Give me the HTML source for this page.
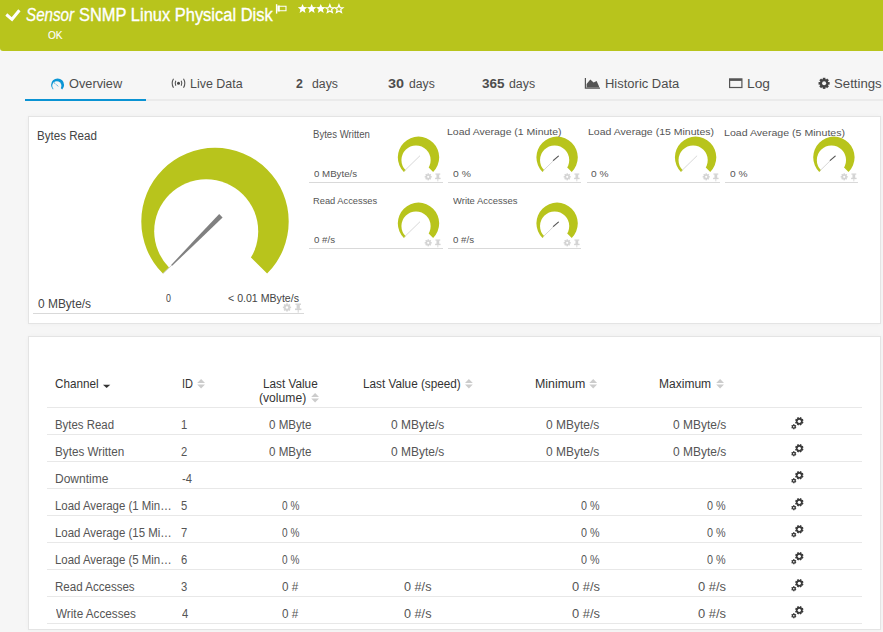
<!DOCTYPE html><html><head><meta charset="utf-8"><style>
*{margin:0;padding:0;box-sizing:border-box}
html,body{width:883px;height:632px;overflow:hidden;background:#f6f6f6;font-family:"Liberation Sans",sans-serif}
.a{position:absolute}
.x{position:absolute;white-space:nowrap;transform-origin:0 0}
.panel{position:absolute;left:28px;width:853px;background:#fff;border:1px solid #e4e4e4;box-shadow:0 0 4px rgba(0,0,0,0.035)}
.ln{position:absolute;height:1px;background:#d9d9d9}
.rl{position:absolute;left:47px;width:815px;height:1px;background:#e8e8e8}
svg.full{position:absolute;left:0;top:0}
</style></head><body>
<div class="a" style="left:0;top:0;width:883px;height:51px;background:#b8c41c;border-bottom-left-radius:3px"></div>
<div class="a" style="left:25px;top:99px;width:858px;height:2px;background:#ebebeb"></div>
<div class="a" style="left:25px;top:99px;width:121px;height:2px;background:#0a93d3"></div>
<div class="panel" style="top:116px;height:208px"></div>
<div class="panel" style="top:336px;height:294px"></div>
<div class="ln" style="left:33px;top:313px;width:271px"></div>
<div class="rl" style="top:407px"></div>
<div class="rl" style="top:434px"></div>
<div class="rl" style="top:461px"></div>
<div class="rl" style="top:488px"></div>
<div class="rl" style="top:515px"></div>
<div class="rl" style="top:542px"></div>
<div class="rl" style="top:569px"></div>
<div class="rl" style="top:596px"></div>
<div class="rl" style="top:623px"></div>
<div class="ln" style="left:309px;top:182px;width:134px"></div>
<div class="ln" style="left:448px;top:182px;width:133px"></div>
<div class="ln" style="left:587px;top:182px;width:133px"></div>
<div class="ln" style="left:725px;top:182px;width:133px"></div>
<div class="ln" style="left:309px;top:248px;width:134px"></div>
<div class="ln" style="left:448px;top:248px;width:133px"></div>
<svg class="full" width="883" height="632"><path d="M6.3 14.5 L12 19.3 L19.4 10.3" stroke="#fff" stroke-width="3" fill="none"/><path d="M276.6 4.2 V13.6" stroke="#fff" stroke-width="1.4"/><path d="M278.2 6.2 H286 V10.8 H278.2 Z" stroke="#fff" stroke-width="1.1" fill="none"/><rect x="277.6" y="5.6" width="2.2" height="5.8" fill="#fff"/><path transform="translate(297.6 3.6) scale(1.1)" d="M4.5 0.3 L5.7 3.2 L8.8 3.4 L6.4 5.4 L7.2 8.5 L4.5 6.8 L1.8 8.5 L2.6 5.4 L0.2 3.4 L3.3 3.2 Z" fill="#fff"/><path transform="translate(306.70000000000005 3.6) scale(1.1)" d="M4.5 0.3 L5.7 3.2 L8.8 3.4 L6.4 5.4 L7.2 8.5 L4.5 6.8 L1.8 8.5 L2.6 5.4 L0.2 3.4 L3.3 3.2 Z" fill="#fff"/><path transform="translate(315.8 3.6) scale(1.1)" d="M4.5 0.3 L5.7 3.2 L8.8 3.4 L6.4 5.4 L7.2 8.5 L4.5 6.8 L1.8 8.5 L2.6 5.4 L0.2 3.4 L3.3 3.2 Z" fill="#fff"/><path transform="translate(324.90000000000003 3.6) scale(1.1)" d="M4.5 1 L5.5 3.6 L8.2 3.8 L6.1 5.5 L6.8 8 L4.5 6.6 L2.2 8 L2.9 5.5 L0.8 3.8 L3.5 3.6 Z" fill="none" stroke="#fff" stroke-width="1.1"/><path transform="translate(334.0 3.6) scale(1.1)" d="M4.5 1 L5.5 3.6 L8.2 3.8 L6.1 5.5 L6.8 8 L4.5 6.6 L2.2 8 L2.9 5.5 L0.8 3.8 L3.5 3.6 Z" fill="none" stroke="#fff" stroke-width="1.1"/><path d="M57.60 84.90 L53.00 89.50 A6.50 6.50 0 1 1 62.20 89.50 Z" fill="#0b96d5"/><circle cx="56.82" cy="85.76" r="4.59" fill="#f6f6f6"/><path d="M54 82.6 L58.6 86.6" stroke="#0b96d5" stroke-width="0.9" stroke-dasharray="1.2 1"/><g stroke="#555" stroke-width="1.1" fill="none"><path d="M173.5 78.8 Q170.8 83.3 173.5 87.8 M183.5 78.8 Q186.2 83.3 183.5 87.8"/><path d="M175.8 80.8 Q174.5 83.3 175.8 85.8 M181.2 80.8 Q182.5 83.3 181.2 85.8"/></g><circle cx="178.5" cy="83.3" r="1.5" fill="#444"/><path d="M585.4 78 V88.2 H600" stroke="#555" stroke-width="1.2" fill="none"/><path d="M586.6 87.6 V84 L590.3 79.4 L593.6 82.6 L596.6 81 L599 86.2 V87.6 Z" fill="#555"/><rect x="729.6" y="78.9" width="12.3" height="8.6" fill="none" stroke="#555" stroke-width="1.2"/><rect x="729.6" y="78.9" width="12.3" height="2" fill="#555"/><g fill="#444"><rect x="822.8" y="77.8" width="2.6" height="11.1" transform="rotate(0 824.1 83.35)"/><rect x="822.8" y="77.8" width="2.6" height="11.1" transform="rotate(45 824.1 83.35)"/><rect x="822.8" y="77.8" width="2.6" height="11.1" transform="rotate(90 824.1 83.35)"/><rect x="822.8" y="77.8" width="2.6" height="11.1" transform="rotate(135 824.1 83.35)"/><circle cx="824.1" cy="83.35" r="4.3"/></g><circle cx="824.1" cy="83.35" r="2.0" fill="#f6f6f6"/><path d="M215.00 221.50 L162.89 273.61 A73.70 73.70 0 1 1 267.11 273.61 Z" fill="#b8c41c"/><circle cx="206.20" cy="231.20" r="52.00" fill="#fff"/><polygon points="219.20,214.01 194.99,239.40 171.11,265.11 171.89,265.89 197.41,241.80 222.60,217.39" fill="#808080"/><line x1="172.00" y1="265.00" x2="163.00" y2="273.50" stroke="#bbb" stroke-width="0.7"/><g transform="translate(282.8 303.3) scale(1.0)"><g fill="#d4d4d4"><circle cx="4.2" cy="4.1" r="3.1"/><rect x="3.35" y="0" width="1.7" height="8.2" transform="rotate(0 4.2 4.1)"/><rect x="3.35" y="0" width="1.7" height="8.2" transform="rotate(45 4.2 4.1)"/><rect x="3.35" y="0" width="1.7" height="8.2" transform="rotate(90 4.2 4.1)"/><rect x="3.35" y="0" width="1.7" height="8.2" transform="rotate(135 4.2 4.1)"/></g><circle cx="4.2" cy="4.1" r="1.25" fill="#fff"/><g fill="#d4d4d4"><rect x="12.6" y="0.2" width="5.6" height="1.4"/><rect x="13.8" y="1" width="3.2" height="4.6"/><rect x="12.2" y="5.2" width="6.4" height="1.6"/><rect x="14.9" y="6" width="1" height="3.4"/></g></g><path d="M418.50 157.30 L403.86 171.94 A20.70 20.70 0 1 1 433.14 171.94 Z" fill="#b8c41c"/><circle cx="416.03" cy="160.02" r="14.61" fill="#fff"/><line x1="420.00" y1="155.70" x2="404.50" y2="170.80" stroke="#cdcdcd" stroke-width="0.8"/><g transform="translate(424.6 173.3) scale(0.86)"><g fill="#d4d4d4"><circle cx="4.2" cy="4.1" r="3.1"/><rect x="3.35" y="0" width="1.7" height="8.2" transform="rotate(0 4.2 4.1)"/><rect x="3.35" y="0" width="1.7" height="8.2" transform="rotate(45 4.2 4.1)"/><rect x="3.35" y="0" width="1.7" height="8.2" transform="rotate(90 4.2 4.1)"/><rect x="3.35" y="0" width="1.7" height="8.2" transform="rotate(135 4.2 4.1)"/></g><circle cx="4.2" cy="4.1" r="1.25" fill="#fff"/><g fill="#d4d4d4"><rect x="12.6" y="0.2" width="5.6" height="1.4"/><rect x="13.8" y="1" width="3.2" height="4.6"/><rect x="12.2" y="5.2" width="6.4" height="1.6"/><rect x="14.9" y="6" width="1" height="3.4"/></g></g><path d="M557.10 157.30 L542.46 171.94 A20.70 20.70 0 1 1 571.74 171.94 Z" fill="#b8c41c"/><circle cx="554.63" cy="160.02" r="14.61" fill="#fff"/><line x1="558.60" y1="155.70" x2="543.10" y2="170.80" stroke="#cdcdcd" stroke-width="0.8"/><line x1="553.10" y1="160.60" x2="558.70" y2="155.90" stroke="#555" stroke-width="1.2"/><g transform="translate(563.6 173.3) scale(0.86)"><g fill="#d4d4d4"><circle cx="4.2" cy="4.1" r="3.1"/><rect x="3.35" y="0" width="1.7" height="8.2" transform="rotate(0 4.2 4.1)"/><rect x="3.35" y="0" width="1.7" height="8.2" transform="rotate(45 4.2 4.1)"/><rect x="3.35" y="0" width="1.7" height="8.2" transform="rotate(90 4.2 4.1)"/><rect x="3.35" y="0" width="1.7" height="8.2" transform="rotate(135 4.2 4.1)"/></g><circle cx="4.2" cy="4.1" r="1.25" fill="#fff"/><g fill="#d4d4d4"><rect x="12.6" y="0.2" width="5.6" height="1.4"/><rect x="13.8" y="1" width="3.2" height="4.6"/><rect x="12.2" y="5.2" width="6.4" height="1.6"/><rect x="14.9" y="6" width="1" height="3.4"/></g></g><path d="M695.60 157.30 L680.96 171.94 A20.70 20.70 0 1 1 710.24 171.94 Z" fill="#b8c41c"/><circle cx="693.13" cy="160.02" r="14.61" fill="#fff"/><line x1="697.10" y1="155.70" x2="681.60" y2="170.80" stroke="#cdcdcd" stroke-width="0.8"/><g transform="translate(702.6 173.3) scale(0.86)"><g fill="#d4d4d4"><circle cx="4.2" cy="4.1" r="3.1"/><rect x="3.35" y="0" width="1.7" height="8.2" transform="rotate(0 4.2 4.1)"/><rect x="3.35" y="0" width="1.7" height="8.2" transform="rotate(45 4.2 4.1)"/><rect x="3.35" y="0" width="1.7" height="8.2" transform="rotate(90 4.2 4.1)"/><rect x="3.35" y="0" width="1.7" height="8.2" transform="rotate(135 4.2 4.1)"/></g><circle cx="4.2" cy="4.1" r="1.25" fill="#fff"/><g fill="#d4d4d4"><rect x="12.6" y="0.2" width="5.6" height="1.4"/><rect x="13.8" y="1" width="3.2" height="4.6"/><rect x="12.2" y="5.2" width="6.4" height="1.6"/><rect x="14.9" y="6" width="1" height="3.4"/></g></g><path d="M833.90 157.30 L819.26 171.94 A20.70 20.70 0 1 1 848.54 171.94 Z" fill="#b8c41c"/><circle cx="831.43" cy="160.02" r="14.61" fill="#fff"/><line x1="835.40" y1="155.70" x2="819.90" y2="170.80" stroke="#cdcdcd" stroke-width="0.8"/><line x1="829.90" y1="160.60" x2="835.50" y2="155.90" stroke="#555" stroke-width="1.2"/><g transform="translate(840.6 173.3) scale(0.86)"><g fill="#d4d4d4"><circle cx="4.2" cy="4.1" r="3.1"/><rect x="3.35" y="0" width="1.7" height="8.2" transform="rotate(0 4.2 4.1)"/><rect x="3.35" y="0" width="1.7" height="8.2" transform="rotate(45 4.2 4.1)"/><rect x="3.35" y="0" width="1.7" height="8.2" transform="rotate(90 4.2 4.1)"/><rect x="3.35" y="0" width="1.7" height="8.2" transform="rotate(135 4.2 4.1)"/></g><circle cx="4.2" cy="4.1" r="1.25" fill="#fff"/><g fill="#d4d4d4"><rect x="12.6" y="0.2" width="5.6" height="1.4"/><rect x="13.8" y="1" width="3.2" height="4.6"/><rect x="12.2" y="5.2" width="6.4" height="1.6"/><rect x="14.9" y="6" width="1" height="3.4"/></g></g><path d="M418.50 223.30 L403.86 237.94 A20.70 20.70 0 1 1 433.14 237.94 Z" fill="#b8c41c"/><circle cx="416.03" cy="226.02" r="14.61" fill="#fff"/><line x1="420.00" y1="221.70" x2="404.50" y2="236.80" stroke="#cdcdcd" stroke-width="0.8"/><g transform="translate(424.6 239.3) scale(0.86)"><g fill="#d4d4d4"><circle cx="4.2" cy="4.1" r="3.1"/><rect x="3.35" y="0" width="1.7" height="8.2" transform="rotate(0 4.2 4.1)"/><rect x="3.35" y="0" width="1.7" height="8.2" transform="rotate(45 4.2 4.1)"/><rect x="3.35" y="0" width="1.7" height="8.2" transform="rotate(90 4.2 4.1)"/><rect x="3.35" y="0" width="1.7" height="8.2" transform="rotate(135 4.2 4.1)"/></g><circle cx="4.2" cy="4.1" r="1.25" fill="#fff"/><g fill="#d4d4d4"><rect x="12.6" y="0.2" width="5.6" height="1.4"/><rect x="13.8" y="1" width="3.2" height="4.6"/><rect x="12.2" y="5.2" width="6.4" height="1.6"/><rect x="14.9" y="6" width="1" height="3.4"/></g></g><path d="M557.10 223.30 L542.46 237.94 A20.70 20.70 0 1 1 571.74 237.94 Z" fill="#b8c41c"/><circle cx="554.63" cy="226.02" r="14.61" fill="#fff"/><line x1="558.60" y1="221.70" x2="543.10" y2="236.80" stroke="#cdcdcd" stroke-width="0.8"/><line x1="553.10" y1="226.60" x2="558.70" y2="221.90" stroke="#555" stroke-width="1.2"/><g transform="translate(563.6 239.3) scale(0.86)"><g fill="#d4d4d4"><circle cx="4.2" cy="4.1" r="3.1"/><rect x="3.35" y="0" width="1.7" height="8.2" transform="rotate(0 4.2 4.1)"/><rect x="3.35" y="0" width="1.7" height="8.2" transform="rotate(45 4.2 4.1)"/><rect x="3.35" y="0" width="1.7" height="8.2" transform="rotate(90 4.2 4.1)"/><rect x="3.35" y="0" width="1.7" height="8.2" transform="rotate(135 4.2 4.1)"/></g><circle cx="4.2" cy="4.1" r="1.25" fill="#fff"/><g fill="#d4d4d4"><rect x="12.6" y="0.2" width="5.6" height="1.4"/><rect x="13.8" y="1" width="3.2" height="4.6"/><rect x="12.2" y="5.2" width="6.4" height="1.6"/><rect x="14.9" y="6" width="1" height="3.4"/></g></g><path d="M103 384.7 H110.3 L106.65 388Z" fill="#333"/><path d="M197.2 383 L201.1 379 L205.0 383Z M197.2 384.6 L201.1 388.6 L205.0 384.6Z" fill="#ccc"/><path d="M311.2 397 L315.09999999999997 393 L319.0 397Z M311.2 398.6 L315.09999999999997 402.6 L319.0 398.6Z" fill="#ccc"/><path d="M465 383 L468.9 379 L472.8 383Z M465 384.6 L468.9 388.6 L472.8 384.6Z" fill="#ccc"/><path d="M589.3 383 L593.1999999999999 379 L597.0999999999999 383Z M589.3 384.6 L593.1999999999999 388.6 L597.0999999999999 384.6Z" fill="#ccc"/><path d="M716.2 383 L720.1 379 L724.0 383Z M716.2 384.6 L720.1 388.6 L724.0 384.6Z" fill="#ccc"/><g fill="#3a3a3a"><rect x="798.4" y="417.1" width="1.8" height="8.4" transform="rotate(22.5 799.3 421.3)"/><rect x="798.4" y="417.1" width="1.8" height="8.4" transform="rotate(67.5 799.3 421.3)"/><rect x="798.4" y="417.1" width="1.8" height="8.4" transform="rotate(112.5 799.3 421.3)"/><rect x="798.4" y="417.1" width="1.8" height="8.4" transform="rotate(157.5 799.3 421.3)"/><circle cx="799.3" cy="421.3" r="3.2"/><rect x="793.1999999999999" y="424.09999999999997" width="1.2" height="5.2" transform="rotate(0 793.8 426.7)"/><rect x="793.1999999999999" y="424.09999999999997" width="1.2" height="5.2" transform="rotate(60 793.8 426.7)"/><rect x="793.1999999999999" y="424.09999999999997" width="1.2" height="5.2" transform="rotate(120 793.8 426.7)"/><circle cx="793.8" cy="426.7" r="2"/></g><circle cx="799.3" cy="421.3" r="1.6" fill="#fff"/><circle cx="793.8" cy="426.7" r="0.8" fill="#fff"/><g fill="#3a3a3a"><rect x="798.4" y="444.1" width="1.8" height="8.4" transform="rotate(22.5 799.3 448.3)"/><rect x="798.4" y="444.1" width="1.8" height="8.4" transform="rotate(67.5 799.3 448.3)"/><rect x="798.4" y="444.1" width="1.8" height="8.4" transform="rotate(112.5 799.3 448.3)"/><rect x="798.4" y="444.1" width="1.8" height="8.4" transform="rotate(157.5 799.3 448.3)"/><circle cx="799.3" cy="448.3" r="3.2"/><rect x="793.1999999999999" y="451.09999999999997" width="1.2" height="5.2" transform="rotate(0 793.8 453.7)"/><rect x="793.1999999999999" y="451.09999999999997" width="1.2" height="5.2" transform="rotate(60 793.8 453.7)"/><rect x="793.1999999999999" y="451.09999999999997" width="1.2" height="5.2" transform="rotate(120 793.8 453.7)"/><circle cx="793.8" cy="453.7" r="2"/></g><circle cx="799.3" cy="448.3" r="1.6" fill="#fff"/><circle cx="793.8" cy="453.7" r="0.8" fill="#fff"/><g fill="#3a3a3a"><rect x="798.4" y="471.1" width="1.8" height="8.4" transform="rotate(22.5 799.3 475.3)"/><rect x="798.4" y="471.1" width="1.8" height="8.4" transform="rotate(67.5 799.3 475.3)"/><rect x="798.4" y="471.1" width="1.8" height="8.4" transform="rotate(112.5 799.3 475.3)"/><rect x="798.4" y="471.1" width="1.8" height="8.4" transform="rotate(157.5 799.3 475.3)"/><circle cx="799.3" cy="475.3" r="3.2"/><rect x="793.1999999999999" y="478.09999999999997" width="1.2" height="5.2" transform="rotate(0 793.8 480.7)"/><rect x="793.1999999999999" y="478.09999999999997" width="1.2" height="5.2" transform="rotate(60 793.8 480.7)"/><rect x="793.1999999999999" y="478.09999999999997" width="1.2" height="5.2" transform="rotate(120 793.8 480.7)"/><circle cx="793.8" cy="480.7" r="2"/></g><circle cx="799.3" cy="475.3" r="1.6" fill="#fff"/><circle cx="793.8" cy="480.7" r="0.8" fill="#fff"/><g fill="#3a3a3a"><rect x="798.4" y="498.1" width="1.8" height="8.4" transform="rotate(22.5 799.3 502.3)"/><rect x="798.4" y="498.1" width="1.8" height="8.4" transform="rotate(67.5 799.3 502.3)"/><rect x="798.4" y="498.1" width="1.8" height="8.4" transform="rotate(112.5 799.3 502.3)"/><rect x="798.4" y="498.1" width="1.8" height="8.4" transform="rotate(157.5 799.3 502.3)"/><circle cx="799.3" cy="502.3" r="3.2"/><rect x="793.1999999999999" y="505.09999999999997" width="1.2" height="5.2" transform="rotate(0 793.8 507.7)"/><rect x="793.1999999999999" y="505.09999999999997" width="1.2" height="5.2" transform="rotate(60 793.8 507.7)"/><rect x="793.1999999999999" y="505.09999999999997" width="1.2" height="5.2" transform="rotate(120 793.8 507.7)"/><circle cx="793.8" cy="507.7" r="2"/></g><circle cx="799.3" cy="502.3" r="1.6" fill="#fff"/><circle cx="793.8" cy="507.7" r="0.8" fill="#fff"/><g fill="#3a3a3a"><rect x="798.4" y="525.0999999999999" width="1.8" height="8.4" transform="rotate(22.5 799.3 529.3)"/><rect x="798.4" y="525.0999999999999" width="1.8" height="8.4" transform="rotate(67.5 799.3 529.3)"/><rect x="798.4" y="525.0999999999999" width="1.8" height="8.4" transform="rotate(112.5 799.3 529.3)"/><rect x="798.4" y="525.0999999999999" width="1.8" height="8.4" transform="rotate(157.5 799.3 529.3)"/><circle cx="799.3" cy="529.3" r="3.2"/><rect x="793.1999999999999" y="532.0999999999999" width="1.2" height="5.2" transform="rotate(0 793.8 534.6999999999999)"/><rect x="793.1999999999999" y="532.0999999999999" width="1.2" height="5.2" transform="rotate(60 793.8 534.6999999999999)"/><rect x="793.1999999999999" y="532.0999999999999" width="1.2" height="5.2" transform="rotate(120 793.8 534.6999999999999)"/><circle cx="793.8" cy="534.6999999999999" r="2"/></g><circle cx="799.3" cy="529.3" r="1.6" fill="#fff"/><circle cx="793.8" cy="534.6999999999999" r="0.8" fill="#fff"/><g fill="#3a3a3a"><rect x="798.4" y="552.0999999999999" width="1.8" height="8.4" transform="rotate(22.5 799.3 556.3)"/><rect x="798.4" y="552.0999999999999" width="1.8" height="8.4" transform="rotate(67.5 799.3 556.3)"/><rect x="798.4" y="552.0999999999999" width="1.8" height="8.4" transform="rotate(112.5 799.3 556.3)"/><rect x="798.4" y="552.0999999999999" width="1.8" height="8.4" transform="rotate(157.5 799.3 556.3)"/><circle cx="799.3" cy="556.3" r="3.2"/><rect x="793.1999999999999" y="559.0999999999999" width="1.2" height="5.2" transform="rotate(0 793.8 561.6999999999999)"/><rect x="793.1999999999999" y="559.0999999999999" width="1.2" height="5.2" transform="rotate(60 793.8 561.6999999999999)"/><rect x="793.1999999999999" y="559.0999999999999" width="1.2" height="5.2" transform="rotate(120 793.8 561.6999999999999)"/><circle cx="793.8" cy="561.6999999999999" r="2"/></g><circle cx="799.3" cy="556.3" r="1.6" fill="#fff"/><circle cx="793.8" cy="561.6999999999999" r="0.8" fill="#fff"/><g fill="#3a3a3a"><rect x="798.4" y="579.0999999999999" width="1.8" height="8.4" transform="rotate(22.5 799.3 583.3)"/><rect x="798.4" y="579.0999999999999" width="1.8" height="8.4" transform="rotate(67.5 799.3 583.3)"/><rect x="798.4" y="579.0999999999999" width="1.8" height="8.4" transform="rotate(112.5 799.3 583.3)"/><rect x="798.4" y="579.0999999999999" width="1.8" height="8.4" transform="rotate(157.5 799.3 583.3)"/><circle cx="799.3" cy="583.3" r="3.2"/><rect x="793.1999999999999" y="586.0999999999999" width="1.2" height="5.2" transform="rotate(0 793.8 588.6999999999999)"/><rect x="793.1999999999999" y="586.0999999999999" width="1.2" height="5.2" transform="rotate(60 793.8 588.6999999999999)"/><rect x="793.1999999999999" y="586.0999999999999" width="1.2" height="5.2" transform="rotate(120 793.8 588.6999999999999)"/><circle cx="793.8" cy="588.6999999999999" r="2"/></g><circle cx="799.3" cy="583.3" r="1.6" fill="#fff"/><circle cx="793.8" cy="588.6999999999999" r="0.8" fill="#fff"/><g fill="#3a3a3a"><rect x="798.4" y="606.0999999999999" width="1.8" height="8.4" transform="rotate(22.5 799.3 610.3)"/><rect x="798.4" y="606.0999999999999" width="1.8" height="8.4" transform="rotate(67.5 799.3 610.3)"/><rect x="798.4" y="606.0999999999999" width="1.8" height="8.4" transform="rotate(112.5 799.3 610.3)"/><rect x="798.4" y="606.0999999999999" width="1.8" height="8.4" transform="rotate(157.5 799.3 610.3)"/><circle cx="799.3" cy="610.3" r="3.2"/><rect x="793.1999999999999" y="613.0999999999999" width="1.2" height="5.2" transform="rotate(0 793.8 615.6999999999999)"/><rect x="793.1999999999999" y="613.0999999999999" width="1.2" height="5.2" transform="rotate(60 793.8 615.6999999999999)"/><rect x="793.1999999999999" y="613.0999999999999" width="1.2" height="5.2" transform="rotate(120 793.8 615.6999999999999)"/><circle cx="793.8" cy="615.6999999999999" r="2"/></g><circle cx="799.3" cy="610.3" r="1.6" fill="#fff"/><circle cx="793.8" cy="615.6999999999999" r="0.8" fill="#fff"/></svg>
<div class="x" style="left:26.14px;top:7.00px;font-size:17.73px;line-height:17.73px;color:#fff;font-weight:400;font-style:italic;transform:scaleX(0.8571);-webkit-text-stroke:0.3px #fff;">Sensor</div>
<div class="x" style="left:79.27px;top:7.00px;font-size:17.73px;line-height:17.73px;color:#fff;font-weight:400;font-style:normal;transform:scaleX(0.9290);-webkit-text-stroke:0.35px #fff;">SNMP Linux Physical Disk</div>
<div class="x" style="left:47.60px;top:30.00px;font-size:11.48px;line-height:11.48px;color:#fff;font-weight:400;font-style:normal;transform:scaleX(0.8813);-webkit-text-stroke:0.1px #fff;">OK</div>
<div class="x" style="left:68.59px;top:78.00px;font-size:12.65px;line-height:12.65px;color:#4d4d4d;font-weight:400;font-style:normal;transform:scaleX(1.0096);">Overview</div>
<div class="x" style="left:189.63px;top:78.00px;font-size:12.79px;line-height:12.79px;color:#4d4d4d;font-weight:400;font-style:normal;transform:scaleX(0.9736);">Live Data</div>
<div class="x" style="left:296.00px;top:78.00px;font-size:12.35px;line-height:12.35px;color:#4d4d4d;font-weight:700;font-style:normal;transform:scaleX(1.0000);">2</div>
<div class="x" style="left:312.40px;top:78.00px;font-size:12.65px;line-height:12.65px;color:#4d4d4d;font-weight:400;font-style:normal;transform:scaleX(0.9704);">days</div>
<div class="x" style="left:387.53px;top:78.00px;font-size:12.35px;line-height:12.35px;color:#4d4d4d;font-weight:700;font-style:normal;transform:scaleX(1.1667);">30</div>
<div class="x" style="left:408.50px;top:78.00px;font-size:12.65px;line-height:12.65px;color:#4d4d4d;font-weight:400;font-style:normal;transform:scaleX(0.9630);">days</div>
<div class="x" style="left:482.31px;top:78.00px;font-size:12.35px;line-height:12.35px;color:#4d4d4d;font-weight:700;font-style:normal;transform:scaleX(1.0947);">365</div>
<div class="x" style="left:508.60px;top:78.00px;font-size:12.65px;line-height:12.65px;color:#4d4d4d;font-weight:400;font-style:normal;transform:scaleX(0.9778);">days</div>
<div class="x" style="left:604.97px;top:78.00px;font-size:12.65px;line-height:12.65px;color:#4d4d4d;font-weight:400;font-style:normal;transform:scaleX(1.0268);">Historic Data</div>
<div class="x" style="left:746.61px;top:78.00px;font-size:12.65px;line-height:12.65px;color:#4d4d4d;font-weight:400;font-style:normal;transform:scaleX(1.0895);">Log</div>
<div class="x" style="left:834.18px;top:78.00px;font-size:12.94px;line-height:12.94px;color:#4d4d4d;font-weight:400;font-style:normal;transform:scaleX(1.0200);">Settings</div>
<div class="x" style="left:37.05px;top:130.00px;font-size:12.21px;line-height:12.21px;color:#444;font-weight:400;font-style:normal;transform:scaleX(0.9492);">Bytes Read</div>
<div class="x" style="left:38.00px;top:298.00px;font-size:12.65px;line-height:12.65px;color:#444;font-weight:400;font-style:normal;transform:scaleX(0.9446);">0 MByte/s</div>
<div class="x" style="left:165.60px;top:293.00px;font-size:11.05px;line-height:11.05px;color:#444;font-weight:400;font-style:normal;transform:scaleX(0.8000);">0</div>
<div class="x" style="left:227.50px;top:293.00px;font-size:11.05px;line-height:11.05px;color:#444;font-weight:400;font-style:normal;transform:scaleX(0.9595);">&lt; 0.01 MByte/s</div>
<div class="x" style="left:313.24px;top:130.00px;font-size:10.03px;line-height:10.03px;color:#555;font-weight:400;font-style:normal;transform:scaleX(0.9586);">Bytes Written</div>
<div class="x" style="left:447.44px;top:127.00px;font-size:9.88px;line-height:9.88px;color:#555;font-weight:400;font-style:normal;transform:scaleX(1.0607);">Load Average (1 Minute)</div>
<div class="x" style="left:587.54px;top:127.00px;font-size:9.88px;line-height:9.88px;color:#555;font-weight:400;font-style:normal;transform:scaleX(1.0650);">Load Average (15 Minutes)</div>
<div class="x" style="left:724.13px;top:128.00px;font-size:9.88px;line-height:9.88px;color:#555;font-weight:400;font-style:normal;transform:scaleX(1.0721);">Load Average (5 Minutes)</div>
<div class="x" style="left:313.36px;top:196.00px;font-size:9.88px;line-height:9.88px;color:#555;font-weight:400;font-style:normal;transform:scaleX(0.9433);">Read Accesses</div>
<div class="x" style="left:452.70px;top:196.00px;font-size:9.88px;line-height:9.88px;color:#555;font-weight:400;font-style:normal;transform:scaleX(0.9567);">Write Accesses</div>
<div class="x" style="left:314.00px;top:169.00px;font-size:9.59px;line-height:9.59px;color:#555;font-weight:400;font-style:normal;transform:scaleX(1.0119);">0 MByte/s</div>
<div class="x" style="left:452.70px;top:169.00px;font-size:9.59px;line-height:9.59px;color:#555;font-weight:400;font-style:normal;transform:scaleX(1.0813);">0 %</div>
<div class="x" style="left:591.00px;top:169.00px;font-size:9.59px;line-height:9.59px;color:#555;font-weight:400;font-style:normal;transform:scaleX(1.0625);">0 %</div>
<div class="x" style="left:729.50px;top:169.00px;font-size:9.59px;line-height:9.59px;color:#555;font-weight:400;font-style:normal;transform:scaleX(1.0625);">0 %</div>
<div class="x" style="left:314.00px;top:235.00px;font-size:9.59px;line-height:9.59px;color:#555;font-weight:400;font-style:normal;transform:scaleX(1.0143);">0 #/s</div>
<div class="x" style="left:452.70px;top:235.00px;font-size:9.59px;line-height:9.59px;color:#555;font-weight:400;font-style:normal;transform:scaleX(1.0143);">0 #/s</div>
<div class="x" style="left:54.98px;top:378.00px;font-size:12.79px;line-height:12.79px;color:#333;font-weight:400;font-style:normal;transform:scaleX(0.9152);">Channel</div>
<div class="x" style="left:181.62px;top:378.00px;font-size:12.5px;line-height:12.5px;color:#333;font-weight:400;font-style:normal;transform:scaleX(0.8818);">ID</div>
<div class="x" style="left:262.96px;top:378.00px;font-size:12.5px;line-height:12.5px;color:#333;font-weight:400;font-style:normal;transform:scaleX(0.9404);">Last Value</div>
<div class="x" style="left:259.43px;top:392.00px;font-size:12.5px;line-height:12.5px;color:#333;font-weight:400;font-style:normal;transform:scaleX(0.9702);">(volume)</div>
<div class="x" style="left:362.76px;top:378.00px;font-size:12.5px;line-height:12.5px;color:#333;font-weight:400;font-style:normal;transform:scaleX(0.9402);">Last Value (speed)</div>
<div class="x" style="left:534.81px;top:378.00px;font-size:12.5px;line-height:12.5px;color:#333;font-weight:400;font-style:normal;transform:scaleX(0.9918);">Minimum</div>
<div class="x" style="left:659.04px;top:378.00px;font-size:12.5px;line-height:12.5px;color:#333;font-weight:400;font-style:normal;transform:scaleX(0.9623);">Maximum</div>
<div class="x" style="left:55.36px;top:419.00px;font-size:12.21px;line-height:12.21px;color:#555;font-weight:400;font-style:normal;transform:scaleX(0.9361);">Bytes Read</div>
<div class="x" style="left:181.28px;top:419.00px;font-size:12.21px;line-height:12.21px;color:#555;font-weight:400;font-style:normal;transform:scaleX(0.9200);">1</div>
<div class="x" style="left:269.40px;top:419.00px;font-size:12.21px;line-height:12.21px;color:#555;font-weight:400;font-style:normal;transform:scaleX(0.9500);">0 MByte</div>
<div class="x" style="left:390.90px;top:419.00px;font-size:12.21px;line-height:12.21px;color:#555;font-weight:400;font-style:normal;transform:scaleX(0.9815);">0 MByte/s</div>
<div class="x" style="left:545.80px;top:419.00px;font-size:12.21px;line-height:12.21px;color:#555;font-weight:400;font-style:normal;transform:scaleX(0.9815);">0 MByte/s</div>
<div class="x" style="left:672.80px;top:419.00px;font-size:12.21px;line-height:12.21px;color:#555;font-weight:400;font-style:normal;transform:scaleX(0.9815);">0 MByte/s</div>
<div class="x" style="left:55.34px;top:446.00px;font-size:12.21px;line-height:12.21px;color:#555;font-weight:400;font-style:normal;transform:scaleX(0.9577);">Bytes Written</div>
<div class="x" style="left:181.08px;top:446.00px;font-size:12.21px;line-height:12.21px;color:#555;font-weight:400;font-style:normal;transform:scaleX(0.9200);">2</div>
<div class="x" style="left:269.40px;top:446.00px;font-size:12.21px;line-height:12.21px;color:#555;font-weight:400;font-style:normal;transform:scaleX(0.9500);">0 MByte</div>
<div class="x" style="left:390.90px;top:446.00px;font-size:12.21px;line-height:12.21px;color:#555;font-weight:400;font-style:normal;transform:scaleX(0.9815);">0 MByte/s</div>
<div class="x" style="left:545.80px;top:446.00px;font-size:12.21px;line-height:12.21px;color:#555;font-weight:400;font-style:normal;transform:scaleX(0.9815);">0 MByte/s</div>
<div class="x" style="left:672.80px;top:446.00px;font-size:12.21px;line-height:12.21px;color:#555;font-weight:400;font-style:normal;transform:scaleX(0.9815);">0 MByte/s</div>
<div class="x" style="left:55.32px;top:473.00px;font-size:12.21px;line-height:12.21px;color:#555;font-weight:400;font-style:normal;transform:scaleX(0.9830);">Downtime</div>
<div class="x" style="left:181.80px;top:473.00px;font-size:12.21px;line-height:12.21px;color:#555;font-weight:400;font-style:normal;transform:scaleX(0.9200);">-4</div>
<div class="x" style="left:55.36px;top:500.00px;font-size:12.21px;line-height:12.21px;color:#555;font-weight:400;font-style:normal;transform:scaleX(0.9361);">Load Average (1 Min…</div>
<div class="x" style="left:181.08px;top:500.00px;font-size:12.21px;line-height:12.21px;color:#555;font-weight:400;font-style:normal;transform:scaleX(0.9200);">5</div>
<div class="x" style="left:281.90px;top:500.00px;font-size:12.21px;line-height:12.21px;color:#555;font-weight:400;font-style:normal;transform:scaleX(0.8238);">0 %</div>
<div class="x" style="left:580.50px;top:500.00px;font-size:12.21px;line-height:12.21px;color:#555;font-weight:400;font-style:normal;transform:scaleX(0.8810);">0 %</div>
<div class="x" style="left:707.40px;top:500.00px;font-size:12.21px;line-height:12.21px;color:#555;font-weight:400;font-style:normal;transform:scaleX(0.8857);">0 %</div>
<div class="x" style="left:55.36px;top:527.00px;font-size:12.21px;line-height:12.21px;color:#555;font-weight:400;font-style:normal;transform:scaleX(0.9361);">Load Average (15 Mi…</div>
<div class="x" style="left:181.08px;top:527.00px;font-size:12.21px;line-height:12.21px;color:#555;font-weight:400;font-style:normal;transform:scaleX(0.9200);">7</div>
<div class="x" style="left:281.90px;top:527.00px;font-size:12.21px;line-height:12.21px;color:#555;font-weight:400;font-style:normal;transform:scaleX(0.8238);">0 %</div>
<div class="x" style="left:580.50px;top:527.00px;font-size:12.21px;line-height:12.21px;color:#555;font-weight:400;font-style:normal;transform:scaleX(0.8810);">0 %</div>
<div class="x" style="left:707.40px;top:527.00px;font-size:12.21px;line-height:12.21px;color:#555;font-weight:400;font-style:normal;transform:scaleX(0.8857);">0 %</div>
<div class="x" style="left:55.36px;top:554.00px;font-size:12.21px;line-height:12.21px;color:#555;font-weight:400;font-style:normal;transform:scaleX(0.9361);">Load Average (5 Min…</div>
<div class="x" style="left:181.08px;top:554.00px;font-size:12.21px;line-height:12.21px;color:#555;font-weight:400;font-style:normal;transform:scaleX(0.9200);">6</div>
<div class="x" style="left:281.90px;top:554.00px;font-size:12.21px;line-height:12.21px;color:#555;font-weight:400;font-style:normal;transform:scaleX(0.8238);">0 %</div>
<div class="x" style="left:580.50px;top:554.00px;font-size:12.21px;line-height:12.21px;color:#555;font-weight:400;font-style:normal;transform:scaleX(0.8810);">0 %</div>
<div class="x" style="left:707.40px;top:554.00px;font-size:12.21px;line-height:12.21px;color:#555;font-weight:400;font-style:normal;transform:scaleX(0.8857);">0 %</div>
<div class="x" style="left:55.35px;top:581.00px;font-size:12.21px;line-height:12.21px;color:#555;font-weight:400;font-style:normal;transform:scaleX(0.9470);">Read Accesses</div>
<div class="x" style="left:181.08px;top:581.00px;font-size:12.21px;line-height:12.21px;color:#555;font-weight:400;font-style:normal;transform:scaleX(0.9200);">3</div>
<div class="x" style="left:281.90px;top:581.00px;font-size:12.21px;line-height:12.21px;color:#555;font-weight:400;font-style:normal;transform:scaleX(0.9588);">0 #</div>
<div class="x" style="left:403.70px;top:581.00px;font-size:12.21px;line-height:12.21px;color:#555;font-weight:400;font-style:normal;transform:scaleX(1.0385);">0 #/s</div>
<div class="x" style="left:571.50px;top:581.00px;font-size:12.21px;line-height:12.21px;color:#555;font-weight:400;font-style:normal;transform:scaleX(1.0577);">0 #/s</div>
<div class="x" style="left:698.40px;top:581.00px;font-size:12.21px;line-height:12.21px;color:#555;font-weight:400;font-style:normal;transform:scaleX(1.0615);">0 #/s</div>
<div class="x" style="left:56.30px;top:608.00px;font-size:12.21px;line-height:12.21px;color:#555;font-weight:400;font-style:normal;transform:scaleX(0.9614);">Write Accesses</div>
<div class="x" style="left:182.00px;top:608.00px;font-size:12.21px;line-height:12.21px;color:#555;font-weight:400;font-style:normal;transform:scaleX(0.9200);">4</div>
<div class="x" style="left:281.90px;top:608.00px;font-size:12.21px;line-height:12.21px;color:#555;font-weight:400;font-style:normal;transform:scaleX(0.9588);">0 #</div>
<div class="x" style="left:403.70px;top:608.00px;font-size:12.21px;line-height:12.21px;color:#555;font-weight:400;font-style:normal;transform:scaleX(1.0385);">0 #/s</div>
<div class="x" style="left:571.50px;top:608.00px;font-size:12.21px;line-height:12.21px;color:#555;font-weight:400;font-style:normal;transform:scaleX(1.0577);">0 #/s</div>
<div class="x" style="left:698.40px;top:608.00px;font-size:12.21px;line-height:12.21px;color:#555;font-weight:400;font-style:normal;transform:scaleX(1.0615);">0 #/s</div>
</body></html>
